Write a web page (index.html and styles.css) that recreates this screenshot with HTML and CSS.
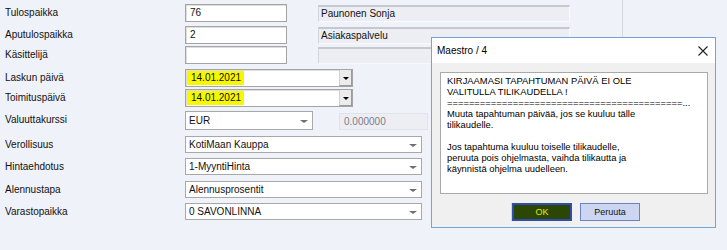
FILE: index.html
```html
<!DOCTYPE html>
<html lang="fi">
<head>
    <meta charset="UTF-8">
    <title>Maestro - Lasku</title>
    <link rel="stylesheet" href="styles.css">
</head>
<body>
    <div class="window">
        <div class="form">
            <div class="row">
                <span class="label">Tulospaikka</span>
                <span class="input">76</span>
                <span class="ro">Paunonen Sonja</span>
            </div>
            <div class="row">
                <span class="label">Aputulospaikka</span>
                <span class="input">2</span>
                <span class="ro">Asiakaspalvelu</span>
            </div>
            <div class="row">
                <span class="label">Käsittelijä</span>
                <span class="input"></span>
                <span class="ro"></span>
            </div>
            <div class="row">
                <span class="label">Laskun päivä</span>
                <span class="date"><span class="mark">14.01.2021</span><span class="drop"><i class="tri"></i></span></span>
            </div>
            <div class="row">
                <span class="label">Toimituspäivä</span>
                <span class="date"><span class="mark">14.01.2021</span><span class="drop"><i class="tri"></i></span></span>
            </div>
            <div class="row">
                <span class="label">Valuuttakurssi</span>
                <span class="select eur">EUR<i class="arrow"></i></span>
                <span class="rate">0.000000</span>
            </div>
            <div class="row">
                <span class="label">Verollisuus</span>
                <span class="select wide">KotiMaan Kauppa<i class="arrow"></i></span>
            </div>
            <div class="row">
                <span class="label">Hintaehdotus</span>
                <span class="select wide">1-MyyntiHinta<i class="arrow"></i></span>
            </div>
            <div class="row">
                <span class="label">Alennustapa</span>
                <span class="select wide">Alennusprosentit<i class="arrow"></i></span>
            </div>
            <div class="row">
                <span class="label">Varastopaikka</span>
                <span class="select wide">0 SAVONLINNA<i class="arrow"></i></span>
            </div>
        </div>
        <div class="side"></div>

        <div class="dialog">
            <div class="titlebar">
                <span>Maestro / 4</span>
                <svg class="close" width="10" height="10" viewBox="0 0 10 10">
                    <path d="M0.5 0.5 L9.5 9.5 M9.5 0.5 L0.5 9.5" stroke="#222" stroke-width="1.1" fill="none"/>
                </svg>
            </div>
            <div class="dlg-body">
                <div class="message">
                    <div>KIRJAAMASI TAPAHTUMAN PÄIVÄ EI OLE</div>
                    <div>VALITULLA TILIKAUDELLA !</div>
                    <div class="rule">===========================================...</div>
                    <div>Muuta tapahtuman päivää, jos se kuuluu tälle</div>
                    <div>tilikaudelle.</div>
                    <div>&nbsp;</div>
                    <div>Jos tapahtuma kuuluu toiselle tilikaudelle,</div>
                    <div>peruuta pois ohjelmasta, vaihda tilikautta ja</div>
                    <div>käynnistä ohjelma uudelleen.</div>
                </div>
                <div class="buttons">
                    <button class="btn ok">OK</button>
                    <button class="btn">Peruuta</button>
                </div>
            </div>
        </div>
    </div>
</body>
</html>
```

FILE: styles.css
```css
body {
    margin: 0;
    background: #eff2f9;
    font-family: "Liberation Sans", Arial, sans-serif;
    font-size: 10px;
    color: #111;
}
.window {
    position: relative;
    display: flex;
    width: 727px;
    height: 250px;
    overflow: hidden;
}
.form {
    width: 622px;
    padding: 4px 0 0 5px;
    box-sizing: border-box;
    display: grid;
    grid-template-rows: 22px 20px 23px 20px 22px 25px 22px 23px 22px 22px;
    align-content: start;
}
.side {
    width: 0;
    height: 40px;
    border-left: 1px solid #d6d8de;
}
.row {
    display: flex;
    align-items: flex-start;
}
.label {
    width: 180px;
    line-height: 18px;
}
.input {
    width: 102px;
    height: 18px;
    box-sizing: border-box;
    border: 1px solid #a4a4a4;
    box-shadow: inset 1px 1px 0 #dedede;
    background: #fff;
    padding-left: 4px;
    line-height: 16px;
}
.ro {
    margin-left: 31px;
    margin-top: 1px;
    width: 252px;
    height: 17px;
    box-sizing: border-box;
    border-top: 2px solid #c6c8cf;
    border-left: 1px solid #d3d5db;
    border-right: 1px solid #f8f9fc;
    border-bottom: 1px solid #f8f9fc;
    background: #eceef4;
    padding-left: 2px;
    line-height: 14px;
}
.date {
    display: flex;
    align-items: center;
    width: 168px;
    height: 18px;
    box-sizing: border-box;
    border: 1px solid #a4a4a4;
    box-shadow: inset 1px 1px 0 #dedede;
    background: #fff;
    padding-left: 1px;
}
.mark {
    background: #f7f700;
    padding: 0 3px 0 4px;
    line-height: 14px;
}
.drop {
    margin-left: auto;
    width: 13px;
    height: 16px;
    box-sizing: border-box;
    background: #ececec;
    border-left: 1px solid #d0d0d0;
    border-bottom: 1px solid #9a9a9a;
    border-right: 1px solid #9a9a9a;
    display: flex;
    align-items: center;
    justify-content: center;
}
.tri {
    width: 0;
    height: 0;
    border-left: 3px solid transparent;
    border-right: 3px solid transparent;
    border-top: 3px solid #000;
    margin-top: 1px;
}
.select {
    position: relative;
    height: 17px;
    box-sizing: border-box;
    border: 1px solid #a8a8a8;
    background: #fff;
    padding-left: 3px;
    line-height: 15px;
}
.select.eur {
    width: 128px;
    height: 19px;
    line-height: 17px;
}
.select.wide {
    width: 237px;
}
.arrow {
    position: absolute;
    right: 4px;
    top: 50%;
    margin-top: -1px;
    width: 0;
    height: 0;
    border-left: 4px solid transparent;
    border-right: 4px solid transparent;
    border-top: 3px solid #6e6e6e;
}
.rate {
    margin-left: 26px;
    margin-top: 2px;
    width: 89px;
    height: 17px;
    box-sizing: border-box;
    border: 1px solid #e0e3ea;
    background: #eceef4;
    color: #7d7d88;
    padding-left: 4px;
    line-height: 15px;
}
.dialog {
    position: absolute;
    left: 431px;
    top: 37px;
    width: 285px;
    height: 191px;
    box-sizing: border-box;
    border: 1px solid #6ea6dc;
    background: #f0f0f0;
    display: flex;
    flex-direction: column;
}
.titlebar {
    height: 25px;
    background: #fff;
    display: flex;
    align-items: center;
    padding: 0 7px 0 5px;
    font-size: 10px;
    color: #000;
}
.close {
    margin-left: auto;
}
.dlg-body {
    flex: 1;
    padding: 9px 7px 0 8px;
}
.message {
    height: 122px;
    box-sizing: border-box;
    border: 1px solid #a9a9a9;
    background: #fff;
    padding: 2px 6px;
    font-size: 9.4px;
    line-height: 11px;
    color: #000;
    white-space: nowrap;
    overflow: hidden;
}
.buttons {
    display: flex;
    justify-content: center;
    gap: 8px;
    margin-top: 9px;
    padding-left: 4px;
}
.btn {
    width: 60px;
    height: 18px;
    box-sizing: border-box;
    border: 1px solid #6c82c6;
    background: #ccd6f1;
    font-family: "Liberation Sans", Arial, sans-serif;
    font-size: 9px;
    color: #111;
    padding: 0;
}
.btn.ok {
    border: 2px solid #2d4db3;
    background: #2c4704;
    color: #e2ef00;
    box-shadow: -1px 0 0 #e6ee20;
}
```
